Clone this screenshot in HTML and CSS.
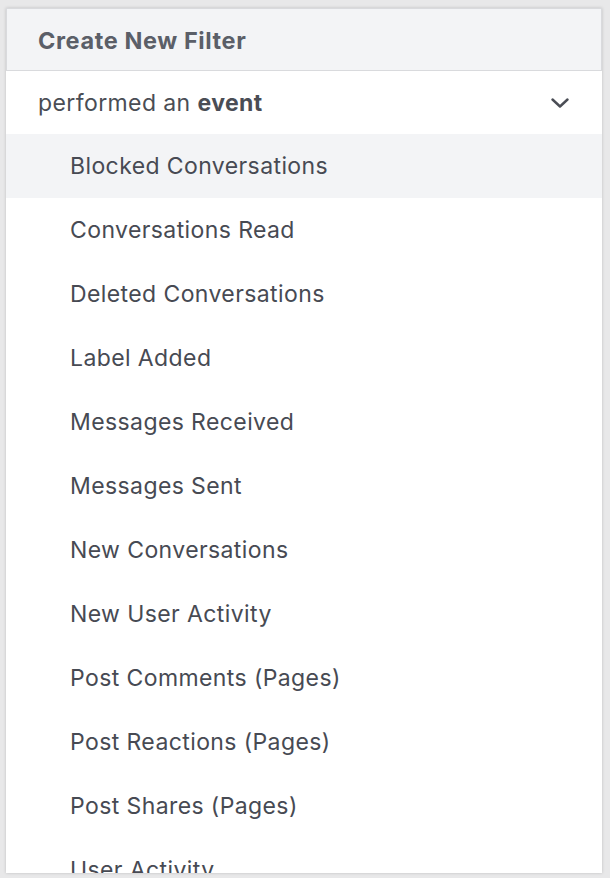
FILE: index.html
```html
<!DOCTYPE html>
<html lang="en">
<head>
<meta charset="utf-8">
<title>Create New Filter</title>
<link rel="stylesheet" href="styles.css">
</head>
<body>
<div class="panel">
  <div class="panel-header">Create New Filter</div>
  <div class="select-row">
    <span class="select-label">performed an <b>event</b></span>
    <svg class="chevron" width="18" height="10" viewBox="0 0 18 10" aria-hidden="true">
      <path d="M1.5 1.5 L9 8.5 L16.5 1.5" fill="none" stroke="#4a4d55" stroke-width="2.4" stroke-linecap="round" stroke-linejoin="round"/>
    </svg>
  </div>
  <ul class="options">
    <li class="option is-active">Blocked Conversations</li>
    <li class="option">Conversations Read</li>
    <li class="option">Deleted Conversations</li>
    <li class="option">Label Added</li>
    <li class="option">Messages Received</li>
    <li class="option">Messages Sent</li>
    <li class="option">New Conversations</li>
    <li class="option">New User Activity</li>
    <li class="option">Post Comments (Pages)</li>
    <li class="option">Post Reactions (Pages)</li>
    <li class="option">Post Shares (Pages)</li>
    <li class="option">User Activity</li>
  </ul>
</div>
</body>
</html>
```
FILE: styles.css
```css
html, body {
  margin: 0;
  padding: 0;
}
body {
  background: #e8e8e9;
  font-family: Inter, "Noto Sans", "Liberation Sans", sans-serif;
  height: 878px;
  overflow: hidden;
}
.panel {
  margin: 8px 0 0 6px;
  width: 596px;
  height: 865px;
  background: #ffffff;
  overflow: hidden;
  box-shadow: 0 0 3px rgba(0, 0, 0, 0.18);
}
.panel-header {
  box-sizing: border-box;
  height: 63px;
  display: flex;
  align-items: center;
  padding-left: 31px;
  padding-top: 2px;
  background: #f3f4f6;
  border: 1.5px solid #d9dadd;
  color: #5b5f68;
  font-size: 23.5px;
  font-weight: 700;
  letter-spacing: 0.6px;
}
.select-row {
  height: 63px;
  display: flex;
  align-items: center;
  justify-content: space-between;
  padding: 0 33px 0 32px;
  color: #4a4d55;
  font-size: 23px;
  letter-spacing: 0.4px;
}
.select-label b {
  font-weight: 700;
}
.chevron {
  display: block;
}
.options {
  list-style: none;
  margin: 0;
  padding: 0;
}
.option {
  height: 64px;
  display: flex;
  align-items: center;
  padding-left: 64px;
  color: #474a53;
  font-size: 23px;
  letter-spacing: 0.4px;
}
.option.is-active {
  background: #f3f4f6;
}
```
